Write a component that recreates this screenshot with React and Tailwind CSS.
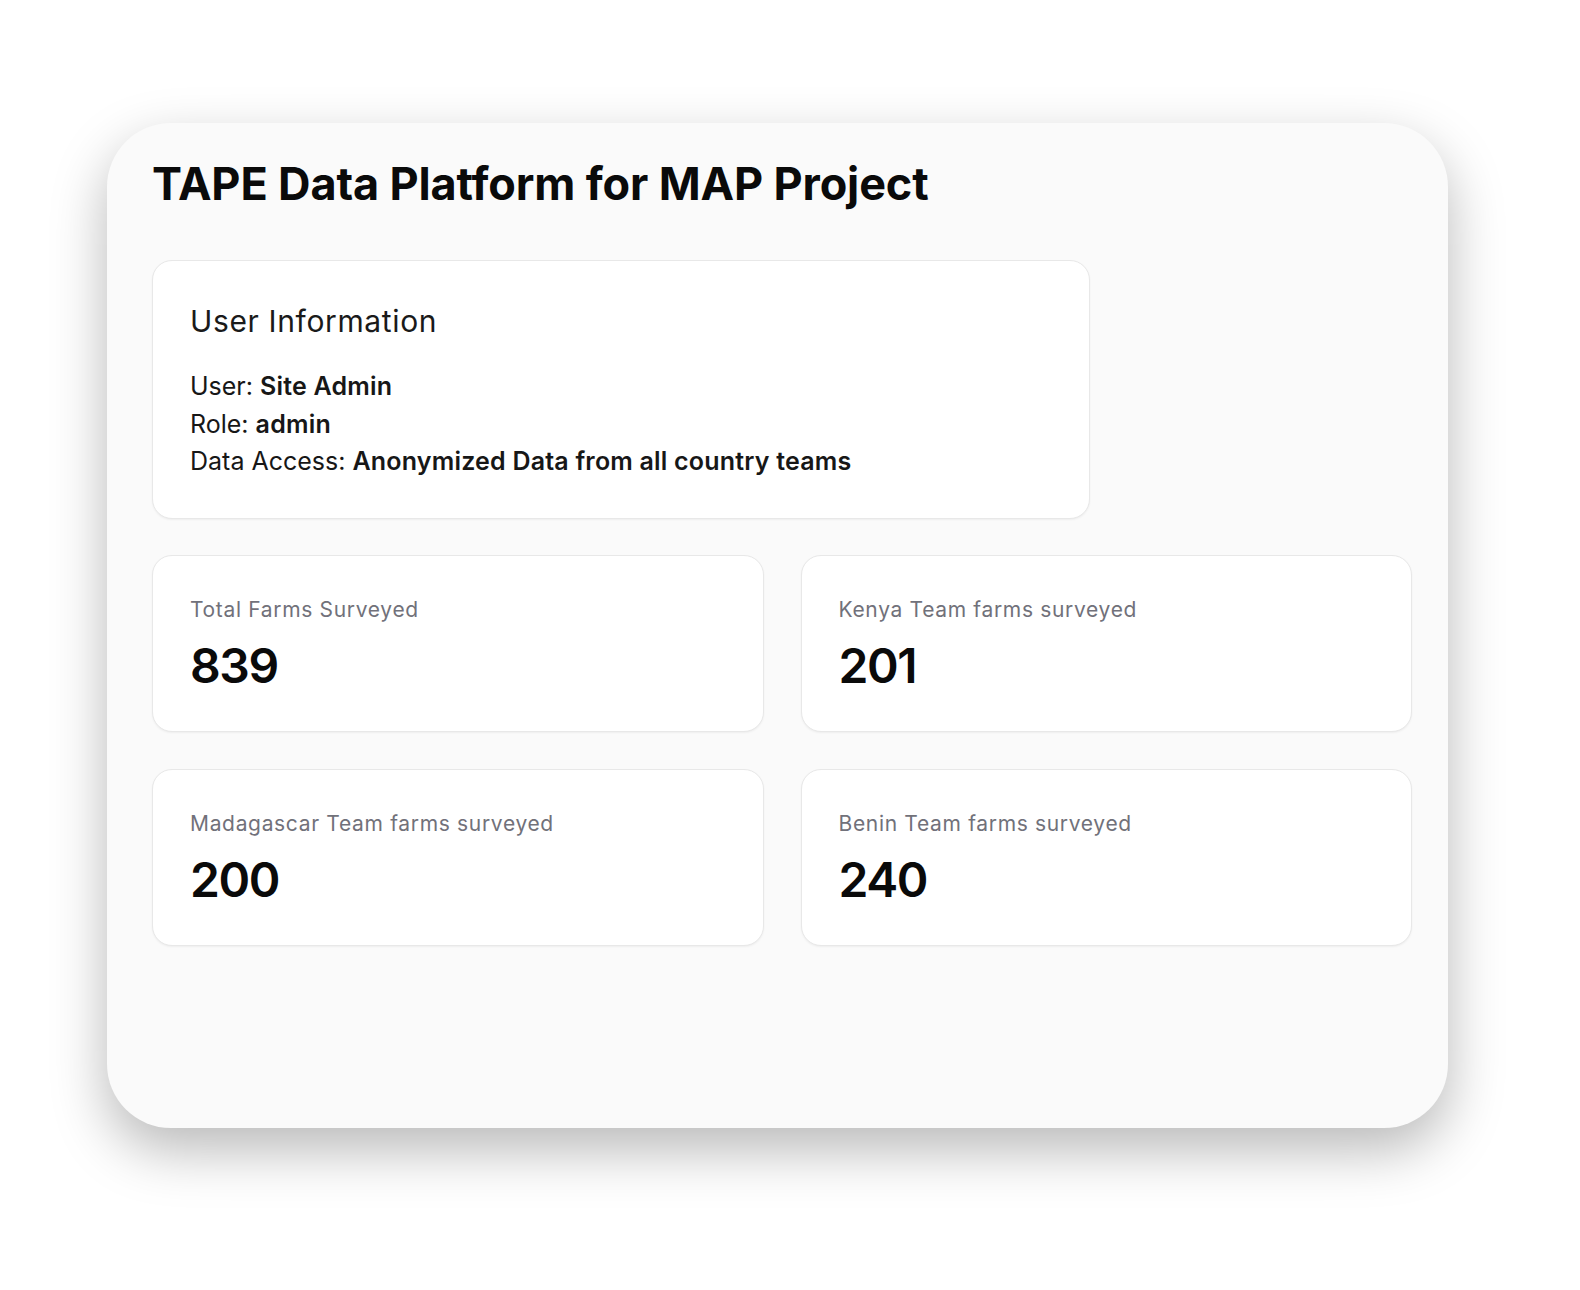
import React from "react";

function Stat({ label, value }) {
  return (
    <div className="h-[177px] rounded-[20px] border border-[#e8e8e8] bg-white px-[37px] pt-[38px] shadow-[0_1px_2px_rgba(0,0,0,0.05)]">
      <div className="text-[21px] leading-[31.5px] tracking-[0.032em] text-[#71717a]">{label}</div>
      <div className="mt-[12px] text-[48px] font-semibold leading-[56px] tracking-[-0.03em] text-[#0a0a0a]">{value}</div>
    </div>
  );
}

export default function App() {
  return (
    <div className="min-h-[1290px] w-[1580px] bg-white pl-[107px] pt-[123px]" style={{ fontFamily: "Inter, 'Noto Sans', sans-serif" }}>
      <div className="h-[1005px] w-[1341px] rounded-[64px] bg-[#fafafa] pl-[45px] pr-[36px] pt-[34px] shadow-[0_22px_55px_rgba(0,0,0,0.28)]">
        <h1 className="text-[45px] font-bold leading-[54px] tracking-[-0.003em] text-[#0a0a0a]">TAPE Data Platform for MAP Project</h1>
        <div className="mt-[49px] h-[259px] w-[938px] rounded-[20px] border border-[#e8e8e8] bg-white px-[37px] pt-[38px] shadow-[0_1px_2px_rgba(0,0,0,0.05)]">
          <h2 className="text-[30px] leading-[45px] tracking-[0.021em] text-[#1a1a1a]">User Information</h2>
          <div className="mt-[24px] text-[25px] leading-[37.5px] text-[#171717]">
            <p>User: <span className="font-semibold tracking-[0.008em]">Site Admin</span></p>
            <p>Role: <span className="font-semibold tracking-[0.008em]">admin</span></p>
            <p>Data Access: <span className="font-semibold tracking-[0.008em]">Anonymized Data from all country teams</span></p>
          </div>
        </div>
        <div className="mt-[36px] grid grid-cols-2 gap-x-[37px] gap-y-[37px]">
          <Stat label="Total Farms Surveyed" value="839" />
          <Stat label="Kenya Team farms surveyed" value="201" />
          <Stat label="Madagascar Team farms surveyed" value="200" />
          <Stat label="Benin Team farms surveyed" value="240" />
        </div>
      </div>
    </div>
  );
}
